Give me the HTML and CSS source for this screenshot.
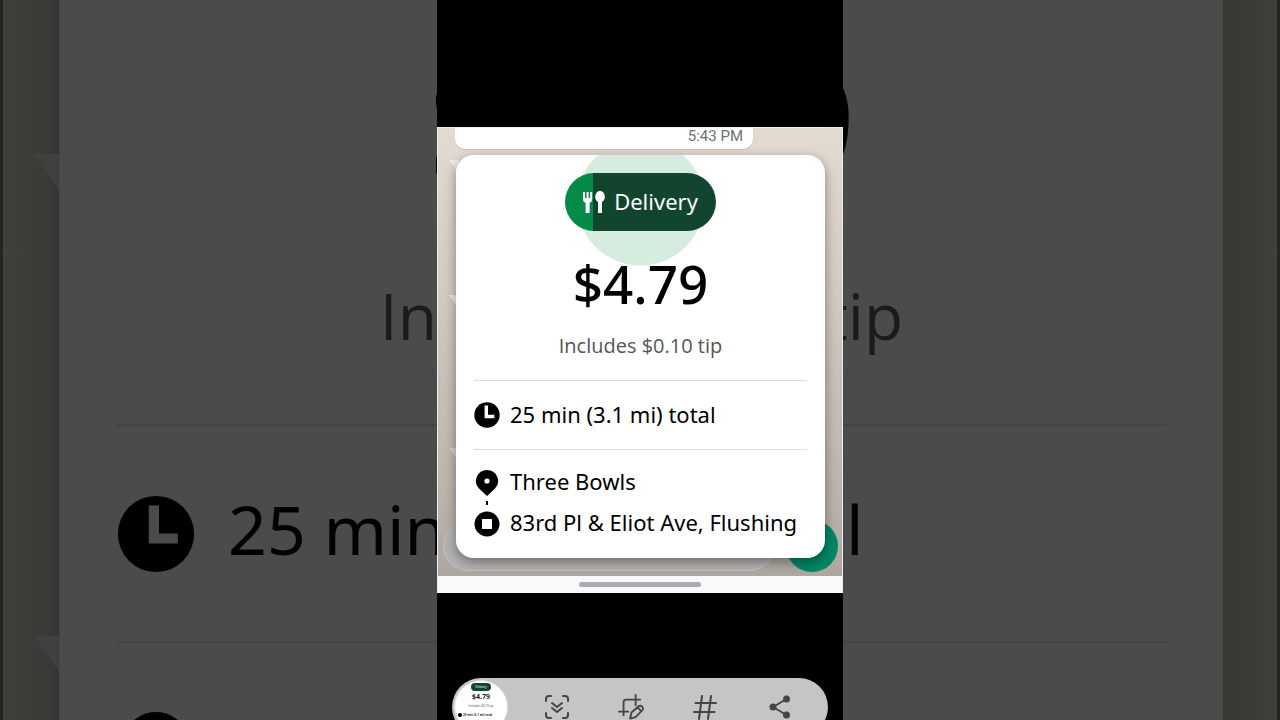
FILE: index.html
```
<!DOCTYPE html>
<html lang="en">
  <head>
    <meta charset="UTF-8" />
    <meta name="viewport" content="width=device-width, initial-scale=1.0" />
    <title>Delivery offer</title>
    <link rel="stylesheet" href="styles.css">
  </head>
  <body>
    <svg class="symbols" aria-hidden="true">
      <symbol id="clock" viewBox="0 0 26 26">
        <circle cx="13" cy="13" r="12.7" />
        <path d="M12.3 3.5v11h8" fill="none" stroke="var(--hole)" stroke-width="3.4" />
      </symbol>
      <symbol id="pin" viewBox="0 0 26 26">
        <path d="M13 0a11 11 0 0 1 8 18.6L13 26l-8-7.400A11 11 0 0 1 13 0z" />
        <circle cx="13" cy="11" r="2.600" fill="var(--hole)" />
      </symbol>
      <symbol id="stop" viewBox="0 0 26 26">
        <circle cx="13" cy="13" r="12.5" />
        <path d="M8 8h10v10H8z" fill="var(--hole)" />
      </symbol>
    </svg>

    <div class="stage">
      <!-- enlarged, dimmed copy behind the phone -->
      <div class="backdrop" aria-hidden="true">
        <span class="tail backdrop-tail-top"></span>
        <span class="tail backdrop-tail-bottom"></span>
        <div class="backdrop-card">
          <div class="backdrop-price">$4.79</div>
          <div class="backdrop-tip">Includes $0.10 tip</div>
          <div class="backdrop-row">
            <svg><use href="#clock" /></svg>
            <span>25 min (3.1 mi) total</span>
          </div>
          <div class="backdrop-row">
            <svg><use href="#pin" /></svg>
            <span>Three Bowls</span>
          </div>
        </div>
      </div>

      <main class="phone">
        <section class="chat">
          <span class="tail tail-first"></span>
          <span class="tail tail-second"></span>
          <span class="tail tail-third"></span>
          <div class="bubble"><time>5:43 PM</time></div>

          <article class="card">
            <div class="badge">
              <svg viewBox="0 0 22 22">
                <path d="M0 1h2v6h1.600V1h2v6h1.600V1h2v7q0 3-2.600 3.600V22H2.600V11.600Q0 11 0 8z" />
                <path d="M17 0a5 5.800 0 0 1 2 11v11h-4V11a5 5.800 0 0 1 2-11z" />
              </svg>
              <span>Delivery</span>
            </div>
            <h1 class="price">$4.79</h1>
            <p class="tip">Includes $0.10 tip</p>
            <div class="total">
              <svg class="icon"><use href="#clock" /></svg>
              <span>25 min (3.1 mi) total</span>
            </div>
            <ul class="stops">
              <li class="pickup">
                <svg class="icon"><use href="#pin" /></svg>
                <span>Three Bowls</span>
              </li>
              <li>
                <svg class="icon"><use href="#stop" /></svg>
                <span>83rd Pl &amp; Eliot Ave, Flushing</span>
              </li>
            </ul>
          </article>

          <div class="composer">
            <div class="composer-field"></div>
            <button class="composer-send" type="button" aria-label="Send"></button>
          </div>
          <div class="nav"><span></span></div>
        </section>

        <div class="toolbar">
          <button class="thumb" type="button" aria-label="Preview">
            <span class="thumb-badge">Delivery</span>
            <span class="thumb-price">$4.79</span>
            <span class="thumb-tip">Includes $0.10 tip</span>
            <span class="thumb-total"><i></i>25 min (3.1 mi) total</span>
          </button>
          <button class="tool" type="button" aria-label="Scroll capture">
            <svg viewBox="0 0 26 26">
              <path d="M2 7V5q0-3 3-3h2M19 2h2q3 0 3 3v2M24 19v2q0 3-3 3h-2M7 24H5q-3 0-3-3v-2M8 9l5 4 5-4M8 14l5 4 5-4" />
            </svg>
          </button>
          <button class="tool" type="button" aria-label="Crop and edit">
            <svg viewBox="0 0 28 28">
              <path d="M19 1v11M24 6H9q-3 0-3 3v14M1 19h10M14.500 20l8-7q2-1 3.500.5t.5 3.500l-7.500 8-6 1.500zM21 14.500l3.500 3.500" />
            </svg>
          </button>
          <button class="tool" type="button" aria-label="Add tag">
            <svg viewBox="0 0 26 26">
              <path d="M10 2L7 25M19 2l-3 23M3.500 9H24M2 18h20.500" />
            </svg>
          </button>
          <button class="tool" type="button" aria-label="Share">
            <svg viewBox="0 0 26 26">
              <path d="M20.500 5L7 13l13.500 8" />
              <g class="dots">
                <circle cx="20.500" cy="5" r="3.500" />
                <circle cx="7" cy="13" r="3.500" />
                <circle cx="20.500" cy="21" r="3.500" />
              </g>
            </svg>
          </button>
        </div>
      </main>
    </div>
  </body>
</html>
```
FILE: styles.css
```
* {
  box-sizing: border-box;
}
body {
  margin: 0;
  background: #242424;
  color: #000;
  font-family: "Noto Sans", "Open Sans", sans-serif;
  --hole: #fff;
}
h1,
p,
ul {
  margin: 0;
  padding: 0;
}
button {
  padding: 0;
  border: none;
  font-family: inherit;
  cursor: pointer;
}
.symbols {
  display: none;
}
.stage {
  display: grid;
  grid-template-rows: 100vh;
  grid-template-columns: 100%;
  height: 100vh;
  overflow: hidden;
}
.backdrop,
.phone {
  grid-area: 1 / 1;
  overflow: hidden;
}

/* backdrop */
.backdrop {
  position: relative;
  margin: 0 3px;
  padding: 0 54px 0 55px;
  background: linear-gradient(90deg, #403f3b, #3b3a37 44px, #343432 54px, #383734 1220px, #403f3b);
  border-left: 1px solid #454441;
  --hole: #4b4b4b;
}
.backdrop-card {
  position: relative;
  height: 100%;
  padding: 0 56px;
  background: #4b4b4b;
  border-left: 1px solid #454545;
  font-size: 68px;
  overflow: hidden;
}
.backdrop-price {
  height: 241px;
  font-size: 168px;
  font-weight: 500;
  line-height: 241px;
  text-align: center;
}
.backdrop-tip {
  height: 183px;
  line-height: 150px;
  color: #1b1b1b;
  font-size: 64px;
  text-align: center;
}
.backdrop-row {
  display: flex;
  align-items: center;
  gap: 32px;
  height: 217px;
  border-top: 2px solid #444;
  white-space: nowrap;
}
.backdrop-row svg {
  width: 80px;
  height: 78px;
}
.backdrop-row span {
  padding-bottom: 10px;
}
.tail {
  position: absolute;
  width: 10px;
  height: 14px;
  background: #eeebe8;
  clip-path: polygon(0 0, 100% 0, 100% 100%);
}
.backdrop .tail {
  left: 30px;
  width: 28px;
  height: 40px;
  background: #40403e;
}
.backdrop-tail-top {
  top: 154px;
}
.backdrop-tail-bottom {
  top: 636px;
}

/* phone */
.phone {
  justify-self: center;
  width: 100%;
  max-width: 406px;
  padding-top: 127px;
  background: #000;
  position: relative;
}
.chat {
  position: relative;
  border: 1px solid #f0ece7;
  border-width: 1px 1px 0;
  background: linear-gradient(#e3dbd2, #d3cac2 35%, #bbb4ad 80%, #aaa49e);
}
.bubble {
  width: 298px;
  height: 21px;
  margin: 0 17px 6px;
  padding-right: 10px;
  background: #fff;
  border-radius: 0 0 10px 10px;
  box-shadow: 0 1px 1px rgba(0, 0, 0, 0.1);
  color: #6b7175;
  font: 15px/16px Roboto, sans-serif;
  text-align: right;
}
.tail-first {
  top: 32px;
  left: 11px;
}
.tail-second {
  top: 167px;
  left: 11px;
}
.tail-third {
  top: 320px;
  left: 11px;
  background: #d5d1cd;
}
.card {
  position: relative;
  z-index: 1;
  display: flex;
  flex-direction: column;
  height: 403px;
  margin: 0 17px 0 18px;
  padding: 18px 18px 0;
  border-radius: 18px;
  background: radial-gradient(circle at 50% 47px, #d5ecdf 63px, #fff 64px);
  box-shadow: 0 4px 12px rgba(0, 0, 0, 0.4);
  font-size: 22px;
  font-weight: 450;
}
.badge {
  display: flex;
  align-items: center;
  align-self: center;
  gap: 9px;
  height: 58px;
  padding: 0 18px;
  border-radius: 29px;
  background: linear-gradient(90deg, #058a47 28px, #11452d 28px);
  color: #fff;
}
.badge svg {
  width: 22px;
  height: 22px;
  fill: #fff;
}
.price {
  margin-top: 18px;
  font-size: 53px;
  font-weight: 500;
  line-height: 70px;
  text-align: center;
}
.tip {
  height: 61px;
  line-height: 54px;
  color: #555;
  font-size: 20px;
  text-align: center;
}
.tip,
.backdrop-tip {
  font-family: "Open Sans", sans-serif;
}
.total,
.stops {
  border-top: 1px solid #dedede;
}
.total {
  display: flex;
  align-items: center;
  gap: 10px;
  height: 69px;
}
.stops {
  padding-top: 12px;
  list-style: none;
}
.stops li {
  position: relative;
  display: flex;
  align-items: center;
  gap: 10px;
  height: 41px;
  white-space: nowrap;
}
.badge span,
.total span,
.stops span {
  padding-bottom: 3px;
}
.icon {
  width: 26px;
  height: 26px;
  flex: none;
}
.pickup::after {
  content: "";
  position: absolute;
  left: 12px;
  bottom: -2px;
  width: 2px;
  height: 4px;
  background: #000;
}
.composer {
  display: flex;
  gap: 11px;
  height: 55px;
  margin-top: -37px;
  padding: 0 4px 5px 5px;
}
.composer-field {
  flex: 1;
  border: 1px solid #c4c0bd;
  border-radius: 25px;
  background: #b5b3b2;
}
.composer-send {
  width: 52px;
  height: 52px;
  margin-top: -1px;
  border-radius: 50%;
  background: #028765;
}
.nav {
  display: flex;
  align-items: center;
  justify-content: center;
  height: 17px;
  background: #f9f8fb;
}
.nav span {
  width: 122px;
  height: 5px;
  border-radius: 3px;
  background: #acabb0;
}

/* screenshot toolbar */
.toolbar {
  display: flex;
  align-items: center;
  height: 58px;
  margin: 85px 15px 0;
  padding: 0 12px 0 2px;
  border-radius: 29px;
  background: #c5c5c5;
}
.thumb {
  display: flex;
  flex-direction: column;
  align-items: center;
  flex: none;
  width: 54px;
  height: 54px;
  padding-top: 2px;
  margin-right: 12px;
  border: 1px solid #ddd;
  border-radius: 50%;
  background: #fff;
  color: #000;
  white-space: nowrap;
  overflow: hidden;
}
.thumb-badge {
  padding: 0 4px;
  border-radius: 4px;
  background: #11452d;
  color: #fff;
  font-size: 3px;
  line-height: 8px;
}
.thumb-price {
  font-size: 7px;
  font-weight: 600;
  line-height: 12px;
}
.thumb-tip {
  color: #555;
  font-size: 3px;
  line-height: 6px;
}
.thumb-total {
  display: flex;
  align-items: center;
  gap: 1px;
  margin: 1px 12px 0 0;
  font-size: 3px;
  font-weight: 600;
  line-height: 10px;
}
.thumb-total i {
  width: 4px;
  height: 4px;
  border-radius: 50%;
  background: #000;
}
.tool {
  display: flex;
  justify-content: center;
  flex: 1;
  background: none;
}
.tool svg {
  width: 26px;
  height: 26px;
  fill: none;
  stroke: #444;
  stroke-width: 2;
  stroke-linecap: round;
  stroke-linejoin: round;
}
.tool .dots {
  fill: #444;
  stroke: none;
}
```
